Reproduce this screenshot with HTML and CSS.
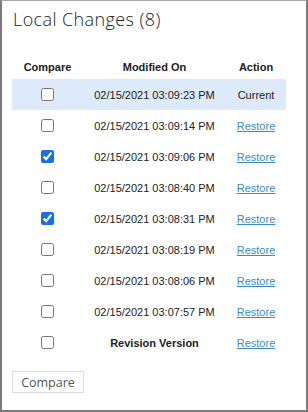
FILE: index.html
```html
<!DOCTYPE html>
<html lang="en">
<head>
    <meta charset="UTF-8">
    <title>Local Changes</title>
    <link rel="stylesheet" href="styles.css">
</head>
<body>

<div class="panel">
    <h1 class="panel-title">Local Changes (8)</h1>

    <table class="changes">
        <thead>
            <tr>
                <th class="col-compare">Compare</th>
                <th class="col-date">Modified On</th>
                <th class="col-action">Action</th>
            </tr>
        </thead>
        <tbody>
            <tr class="current">
                <td><input type="checkbox"></td>
                <td>02/15/2021 03:09:23 PM</td>
                <td>Current</td>
            </tr>
            <tr>
                <td><input type="checkbox"></td>
                <td>02/15/2021 03:09:14 PM</td>
                <td><a href="#">Restore</a></td>
            </tr>
            <tr>
                <td><input type="checkbox" checked></td>
                <td>02/15/2021 03:09:06 PM</td>
                <td><a href="#">Restore</a></td>
            </tr>
            <tr>
                <td><input type="checkbox"></td>
                <td>02/15/2021 03:08:40 PM</td>
                <td><a href="#">Restore</a></td>
            </tr>
            <tr>
                <td><input type="checkbox" checked></td>
                <td>02/15/2021 03:08:31 PM</td>
                <td><a href="#">Restore</a></td>
            </tr>
            <tr>
                <td><input type="checkbox"></td>
                <td>02/15/2021 03:08:19 PM</td>
                <td><a href="#">Restore</a></td>
            </tr>
            <tr>
                <td><input type="checkbox"></td>
                <td>02/15/2021 03:08:06 PM</td>
                <td><a href="#">Restore</a></td>
            </tr>
            <tr>
                <td><input type="checkbox"></td>
                <td>02/15/2021 03:07:57 PM</td>
                <td><a href="#">Restore</a></td>
            </tr>
            <tr>
                <td><input type="checkbox"></td>
                <td class="revision">Revision Version</td>
                <td><a href="#">Restore</a></td>
            </tr>
        </tbody>
    </table>

    <button class="compare-btn" type="button">Compare</button>
</div>

</body>
</html>
```

FILE: styles.css
```css
body {
    margin: 0;
    background-color: #fff;
}

.panel {
    box-sizing: border-box;
    width: 308px;
    height: 412px;
    border: 2px solid #7b7b7b;
    border-top: 1px solid #a9a9a9;
    padding: 0 10px;
    font-family: "Liberation Sans", Arial, sans-serif;
}

.panel-title {
    margin: 0;
    padding: 6px 0 0 1px;
    font-family: "Open Sans", sans-serif;
    font-size: 18px;
    font-weight: 300;
    line-height: 24px;
    letter-spacing: 0.4px;
    color: #222;
}

.changes {
    margin-top: 24px;
    width: 274px;
    border-collapse: collapse;
    border-spacing: 0;
    font-size: 11px;
    color: #222;
}

.changes th {
    height: 24px;
    padding: 0;
    font-weight: bold;
    text-align: center;
    vertical-align: middle;
}

.col-compare {
    width: 71px;
}

.col-action {
    width: 60px;
}

.changes td {
    height: 31px;
    padding: 0;
    text-align: center;
    vertical-align: middle;
}

.changes tr.current td {
    background-color: #dceaf9;
}

.changes input[type="checkbox"] {
    display: block;
    margin: 0 auto;
    width: 13px;
    height: 13px;
    accent-color: #1a6fe6;
}

.changes .revision {
    font-weight: bold;
}

.changes a {
    color: #3a8cc4;
    text-decoration: underline;
}

.compare-btn {
    display: block;
    margin-top: 13px;
    width: 72px;
    height: 22px;
    padding: 0;
    background-color: #fff;
    border: 1px solid #dcdcdc;
    font-family: "Open Sans", sans-serif;
    font-size: 12.5px;
    color: #555;
}
```
